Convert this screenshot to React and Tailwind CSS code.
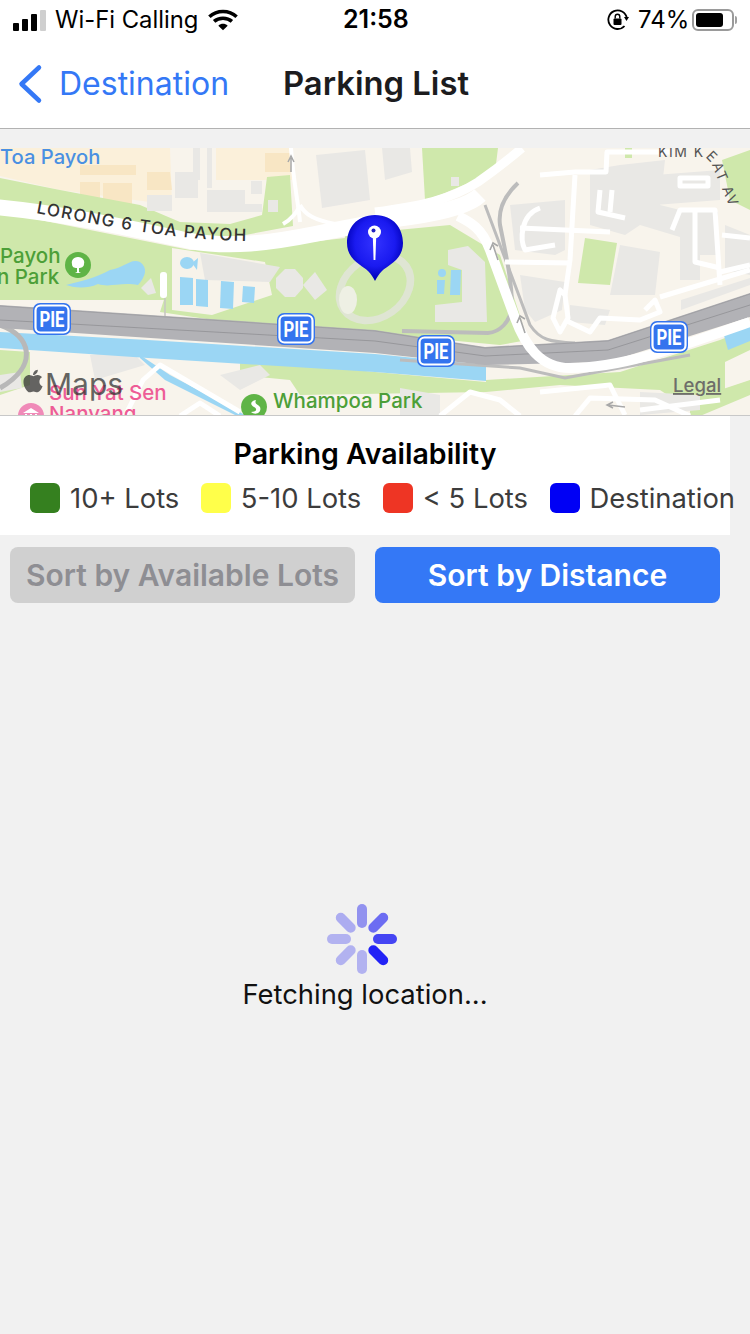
import React from 'react';
import { FaApple } from 'react-icons/fa';

const FONT = { fontFamily: 'Inter, "Noto Sans", sans-serif' };

const legendItems = [
  { label: '10+ Lots', color: 'bg-[#35801f]' },
  { label: '5-10 Lots', color: 'bg-[#ffff4a]' },
  { label: '< 5 Lots', color: 'bg-[#ee3524]' },
  { label: 'Destination', color: 'bg-[#0000f5]' },
];

const spinnerBars = [
  { angle: 0, color: '#9292ef' },
  { angle: 45, color: '#6c6cf2' },
  { angle: 90, color: '#4545f3' },
  { angle: 135, color: '#2222f6' },
  { angle: 180, color: '#b2b2f0' },
  { angle: 225, color: '#b2b2f0' },
  { angle: 270, color: '#b2b2f0' },
  { angle: 315, color: '#acacf0' },
];

const signalBars = [
  { height: 'h-[8px]', color: 'bg-black' },
  { height: 'h-[12px]', color: 'bg-black' },
  { height: 'h-[17px]', color: 'bg-black' },
  { height: 'h-[21px]', color: 'bg-[#cfcfcf]' },
];

// land-use fills on the map, in page coordinates
const greens = [
  'M0 212 L100 232 L190 250 L178 300 L0 300Z',
  'M180 250 L240 250 L345 238 L345 340 L160 312Z',
  'M345 235 L450 225 L500 255 L528 340 L500 345 L340 330Z',
  'M422 148 L498 148 L495 172 L440 195 L425 200Z',
  'M0 178 L60 190 L140 205 L180 222 L230 224 L262 215 L267 177 L290 175 L293 226 L240 236 L190 236 L100 222 L0 205Z',
  'M585 238 L617 243 L610 285 L578 283Z',
  'M240 358 L375 372 L486 382 L486 392 L300 395 L290 380 L240 375Z',
  'M486 380 L620 372 L720 340 L750 328 L750 350 L725 362 L725 395 L690 410 L660 390 L560 385 L486 392Z',
  'M722 160 L750 150 L750 210 L730 200Z',
  'M0 350 L30 352 L30 385 L0 395Z',
  'M690 400 L750 380 L750 395 L700 416 L690 416Z',
  'M625 148 L632 148 L632 158 L625 158Z',
];

const buildings = [
  'M147 195 L172 195 L172 211 L147 211Z',
  'M175 172 L198 172 L198 198 L175 198Z',
  'M207 190 L245 190 L245 204 L262 204 L262 212 L207 212Z',
  'M251 181 L262 181 L262 194 L251 194Z',
  'M268 200 L278 200 L278 212 L268 212Z',
  'M193 148 L200 148 L200 180 L193 180Z',
  'M207 148 L212 148 L212 188 L207 188Z',
  'M316 155 L365 150 L370 200 L322 208Z',
  'M382 148 L410 148 L412 172 L385 180Z',
  'M451 177 L459 177 L459 186 L451 186Z',
  'M448 250 L468 246 L485 262 L487 322 L435 322 L435 305 L462 302 L462 270 L448 265Z',
  'M510 205 L565 200 L565 250 L555 255 L515 250Z',
  'M520 275 L565 282 L562 310 L535 322 L525 310Z',
  'M590 170 L620 165 L665 160 L660 205 L700 215 L690 240 L640 225 L625 235 L590 225Z',
  'M655 175 L720 170 L720 200 L655 205Z',
  'M620 245 L660 252 L655 295 L610 295 L618 255Z',
  'M680 212 L700 212 L700 280 L680 280Z',
  'M700 212 L718 212 L718 255 L700 255Z',
  'M725 225 L750 235 L750 275 L725 270Z',
  'M570 305 L610 310 L605 325 L570 322Z',
  'M681 300 L750 278 L750 285 L681 310Z',
  'M90 355 L130 350 L145 365 L95 380Z',
  'M220 375 L260 365 L270 375 L240 390Z',
  'M0 375 L20 372 L22 388 L0 392Z',
  'M276 278 L285 269 L295 269 L303 278 L303 288 L295 297 L285 297 L276 288Z',
  'M303 285 L315 272 L327 290 L315 300Z',
  'M141 288 L151 278 L156 293 L148 295Z',
  'M640 392 L700 395 L700 410 L640 415Z',
  'M400 388 L440 395 L440 416 L400 416Z',
];

const tans = [
  'M0 148 L170 148 L172 205 L60 190 L0 176Z',
  'M216 148 L292 148 L292 180 L216 180Z',
];

const darkTans = [
  'M80 182 L100 182 L100 205 L80 205Z',
  'M103 183 L132 183 L132 205 L103 205Z',
  'M80 165 L136 165 L136 175 L80 175Z',
  'M147 172 L170 172 L172 190 L147 190Z',
  'M265 153 L292 153 L292 172 L265 172Z',
];

// thin service roads between the blocks on the right
const lanes = [
  'M540 208 C520 215 520 240 525 250 L555 245',
  'M520 228 L610 232',
  'M575 175 L570 260 L565 295',
  'M600 190 L598 212 L625 218',
  'M612 190 L610 212',
  'M540 175 L575 172 L606 172 L607 152 L670 152',
  'M505 262 L570 263',
  'M560 290 L553 318 L560 332 L568 318 L565 295 Z',
  'M565 320 L590 332 L600 318 L640 320 L660 312 L655 300 L645 310',
  'M672 230 L680 210 L715 210 L720 285',
  'M695 212 L695 262 L720 268',
  'M680 178 L708 178 L708 186 L680 186 Z',
  'M722 235 L750 238',
  'M720 272 L750 265',
  'M660 297 L750 270',
  'M540 392 L610 385 L625 415',
  'M640 410 L720 400',
  'M125 416 L143 380 L160 365 L240 412',
  'M180 416 L200 403 L220 416',
  'M440 416 L470 392 L500 400 L520 416',
  'M575 416 L590 398 L655 400 L690 416',
];

function MapPin() {
  return (
    <g>
      <path d="M375 215 C394 215 403 229 403 243 C403 260 388 265 382 271 C379 274 377 277 375 281 C373 277 371 274 368 271 C362 265 347 260 347 243 C347 229 356 215 375 215Z" fill="url(#pinFill)" />
      <circle cx="374.5" cy="232" r="6.5" fill="white" />
      <path d="M372.8 236 L376.2 236 L375.4 260 L373.6 260Z" fill="white" />
      <circle cx="373.5" cy="230.5" r="2" fill="#2020c0" />
    </g>
  );
}

function RouteBadge({ x, y }) {
  return (
    <g>
      <rect x={x - 19} y={y - 16} width="38" height="32" rx="7" fill="#3474ee" />
      <rect x={x - 16.5} y={y - 13.5} width="33" height="27" rx="5" fill="none" stroke="white" strokeWidth="2.2" />
      <text x={x} y={y + 8} textAnchor="middle" fill="white" fontSize="22" fontWeight="700" textLength="25" lengthAdjust="spacingAndGlyphs" style={{ fontFamily: 'Roboto, sans-serif' }}>PIE</text>
    </g>
  );
}

function ParkMap() {
  return (
    <svg viewBox="0 148 750 267" width="750" height="267" className="block" style={FONT}>
      <defs>
        <radialGradient id="pinFill" cx="50%" cy="42%" r="55%">
          <stop offset="0%" stopColor="#3333ff" />
          <stop offset="65%" stopColor="#1a1af0" />
          <stop offset="100%" stopColor="#0000b8" />
        </radialGradient>
        <path id="lorongPath" d="M36 213 C100 225 170 240 250 241" />
        <path id="kimPath" d="M658 157 L700 157 C710 157 712 165 716 175 L730 208" />
      </defs>

      <rect x="0" y="148" width="750" height="267" fill="#f8f4ec" />
      {tans.map((d) => <path key={d} d={d} fill="#fbf0da" />)}
      {darkTans.map((d) => <path key={d} d={d} fill="#f8e6c4" />)}
      {greens.map((d) => <path key={d} d={d} fill="#cfe8ab" />)}
      {buildings.map((d) => <path key={d} d={d} fill="#e9e8e5" />)}

      {/* pool block */}
      <path d="M172 248 L265 262 L272 295 L212 315 L172 310Z" fill="#f7f3ea" />
      <path d="M200 253 L280 267 L270 282 L205 280Z" fill="#e7e6e3" />
      <path d="M180 277 L193 278 L193 305 L180 305Z M196 279 L208 280 L208 307 L196 306Z M221 281 L234 282 L233 309 L220 308Z M243 286 L255 287 L254 303 L242 302Z" fill="#9bd6f4" />
      <ellipse cx="187" cy="263" rx="7" ry="6" fill="#9bd6f4" />
      <path d="M192 263 L198 258 L197 270Z" fill="#9bd6f4" />
      <path d="M66 285 C85 280 95 278 110 270 C125 268 130 258 140 262 C148 268 146 276 138 285 C120 282 110 288 98 284 C85 290 72 287 66 285Z" fill="#9bd6f4" />
      <rect x="160" y="272" width="7" height="26" rx="3" fill="white" />
      <path d="M165 298 L165 336 M145 340 L145 355 L160 355" stroke="#c8c8c2" strokeWidth="1.6" fill="none" />

      {/* stadium */}
      <ellipse cx="375" cy="288" rx="42" ry="33" fill="#dfe5d3" transform="rotate(-35 375 288)" />
      <ellipse cx="375" cy="288" rx="34" ry="26" fill="#cfe8ab" transform="rotate(-35 375 288)" />
      <ellipse cx="348" cy="300" rx="9" ry="14" fill="#eef0e4" />
      <path d="M437 280 L445 280 L444 294 L437 294Z M451 270 L461 270 L460 295 L450 295Z" fill="#9bd6f4" />
      <circle cx="442" cy="273" r="4" fill="#9bd6f4" />

      {/* water */}
      <path d="M0 332 L148 340 L375 354 L486 365 L486 381 L375 372 L148 358 L0 348Z" fill="#9bd6f4" />
      <path d="M723 332 L750 322 L750 341 L728 350Z" fill="#9bd6f4" />
      <path d="M140 355 L170 375 L245 415 L235 415 L165 380 L140 358Z" fill="#9bd6f4" />

      {/* grey ramps */}
      <path d="M0 325 C30 335 40 365 0 388" stroke="#b8b8b8" strokeWidth="5" fill="none" />
      <path d="M518 183 C505 195 498 210 500 225 C505 250 512 280 512 307 C510 322 500 332 488 333 L402 331" stroke="#bcbcbc" strokeWidth="4" fill="none" />
      <path d="M485 205 L530 325 C540 340 550 342 575 343" stroke="#bcbcbc" strokeWidth="3" fill="none" />
      <path d="M400 360 L520 368 L565 378 L690 355" stroke="#bcbcbc" strokeWidth="3" fill="none" />

      {/* expressway */}
      <path d="M0 305 L375 330 L485 347 L608 340 L750 293 L750 317 L608 362 L485 365 L375 353 L0 328Z" fill="#b2b2b6" />
      <path d="M0 320 L375 341 L485 356 L608 350 L750 305" stroke="#97979b" strokeWidth="1" fill="none" />
      <path d="M0 306 L375 331 L485 348 L608 341 L750 294" stroke="#a0a0a4" strokeWidth="1" fill="none" />

      {/* roads */}
      <path d="M-5 207 C60 213 120 226 190 241 C230 248 270 243 315 234 C345 228 375 222 410 217 C445 212 470 205 480 195" stroke="white" strokeWidth="16" fill="none" />
      <path d="M375 212 C420 206 450 200 478 182 C495 170 508 160 522 148" stroke="white" strokeWidth="9" fill="none" />
      <path d="M458 216 C470 222 482 228 490 250 L515 318 C525 345 540 368 570 368 C620 368 670 350 750 322" stroke="white" strokeWidth="10" fill="none" />
      <path d="M291 148 C293 180 298 200 300 222 M300 205 C305 215 315 220 335 224 M300 205 C296 215 290 220 283 224" stroke="white" strokeWidth="4" fill="none" />
      {lanes.map((d) => <path key={d} d={d} stroke="white" strokeWidth="5" fill="none" strokeLinejoin="round" />)}
      <path d="M291 172 L291 158 M288 162 L291 156 L294 162" stroke="#a8a8a8" strokeWidth="1.5" fill="none" />
      <path d="M498 260 L493 245 M490 250 L493 243 L498 246 M525 333 L520 318 M517 323 L520 316 L525 319" stroke="#a8a8a8" strokeWidth="1.6" fill="none" />
      <path d="M625 407 L608 405 M613 402 L607 405 L613 408" stroke="#a8a8a8" strokeWidth="1.5" fill="none" />

      {/* labels */}
      <text fontSize="17" fontWeight="500" fill="#333" letterSpacing="1.4"><textPath href="#lorongPath">LORONG 6 TOA PAYOH</textPath></text>
      <text fontSize="14" fill="#555" letterSpacing="1.5"><textPath href="#kimPath">KIM KEAT AVE</textPath></text>
      <text x="0" y="164" fontSize="20.2" fontWeight="500" fill="#4a90e2">Toa Payoh</text>
      <text x="0" y="263" fontSize="20.5" fontWeight="500" fill="#4c9f38">Payoh</text>
      <text x="-3" y="284" fontSize="20.5" fontWeight="500" fill="#4c9f38">n Park</text>
      <circle cx="78" cy="265" r="13" fill="#5fb446" />
      <path d="M78 257 C83 257 85 261 84 264 C84 267 81 268 79 268 L79 272 L81 273 L75 273 L77 272 L77 268 C74 268 72 267 72 264 C71 261 73 257 78 257Z" fill="white" />
      <text x="273" y="408" fontSize="20.5" fontWeight="500" fill="#4c9f38">Whampoa Park</text>
      <circle cx="254" cy="407" r="13" fill="#5fb446" />
      <path d="M256 400 C250 401 250 405 254 407 C258 409 256 412 251 412 C256 416 262 412 260 407 C258 404 254 404 256 400Z" fill="white" />
      <text x="49" y="400" fontSize="20.5" fontWeight="500" fill="#ee5c96">Sun Yat Sen</text>
      <text x="49" y="421" fontSize="20.5" fontWeight="500" fill="#ee5c96">Nanyang</text>
      <circle cx="31" cy="416" r="13" fill="#f08ab8" />
      <path d="M23 413 L31 408 L39 413Z M25 414 H27 V421 H25Z M30 414 H32 V421 H30Z M35 414 H37 V421 H35Z" fill="white" />
      <text x="673" y="392" fontSize="18.6" fontWeight="500" fill="#6e6e6a" textDecoration="underline">Legal</text>

      <RouteBadge x={52} y={319} />
      <RouteBadge x={296} y={329} />
      <RouteBadge x={436} y={351} />
      <RouteBadge x={669} y={337} />

      <g opacity="0.75">
        <FaApple x={20} y={368} size={26} color="#333" />
        <text x="45" y="395" fontSize="30" fill="#333">Maps</text>
      </g>

      <MapPin />
    </svg>
  );
}

function StatusBar() {
  return (
    <div className="flex items-center h-[40px] bg-white text-black">
      <div className="flex items-end gap-[3px] ml-[13px]">
        {signalBars.map((bar, i) => (
          <span key={i} className={`w-[6px] rounded-[1px] ${bar.height} ${bar.color}`} />
        ))}
      </div>
      <span className="ml-[9px] w-[153px] text-[23.8px] whitespace-nowrap">Wi-Fi Calling</span>
      <svg width="30" height="24" viewBox="0 0 32 24">
        <path d="M1.5 8.5 C9.5 1 22.5 1 30.5 8.5" stroke="black" strokeWidth="3.8" fill="none" />
        <path d="M6.5 13.5 C11.5 9 20.5 9 25.5 13.5" stroke="black" strokeWidth="3.8" fill="none" />
        <path d="M11 18 L16 23 L21 18 C18 15.5 14 15.5 11 18Z" fill="black" />
      </svg>
      <span className="ml-[105px] w-[64px] text-[25px] font-semibold whitespace-nowrap">21:58</span>
      <svg width="22" height="22" viewBox="0 0 22 22" className="ml-[200px]">
        <path d="M17.5 17 A9.3 9.3 0 1 1 19.8 9" stroke="black" strokeWidth="1.8" fill="none" />
        <path d="M17 8 L22 8 L19.5 12Z" fill="black" />
        <rect x="6.5" y="9.5" width="8" height="6.5" rx="1" fill="black" />
        <path d="M8.2 9.5 V7.5 A2.3 2.3 0 0 1 12.8 7.5 V9.5" stroke="black" strokeWidth="1.4" fill="none" />
      </svg>
      <span className="ml-[9px] w-[48px] text-[24px] whitespace-nowrap">74%</span>
      <div className="ml-[6px] w-[42px] h-[22px] rounded-[6px] border-2 border-[#9a9a9a] p-[2px] flex">
        <div className="w-[27px] bg-black rounded-[3px]" />
      </div>
      <div className="ml-[1px] w-[2px] h-[8px] bg-[#a0a0a0] rounded-r-sm" />
    </div>
  );
}

function NavBar() {
  return (
    <div className="flex items-center h-[89px] bg-white border-b border-[#b2b2b2]">
      <svg width="26" height="40" viewBox="0 0 26 40" className="ml-[18px]">
        <path d="M21 3.5 L3.5 20 L21 36.5" stroke="#3478f6" strokeWidth="4.5" fill="none" strokeLinecap="round" strokeLinejoin="round" />
      </svg>
      <span className="ml-[15px] w-[224px] text-[32px] text-[#3478f6]">Destination</span>
      <span className="text-[32.8px] font-semibold text-[#1c1c1e]">Parking List</span>
    </div>
  );
}

function Legend() {
  return (
    <div className="w-[730px] h-[119px] bg-white pt-[22px]">
      <div className="text-center text-[28.5px] leading-[32px] font-semibold text-black">Parking Availability</div>
      <div className="flex items-center gap-[21.5px] pl-[30px] mt-[12px] whitespace-nowrap">
        {legendItems.map((item) => (
          <div key={item.label} className="flex items-center gap-[10px]">
            <span className={`w-[30px] h-[30px] rounded-[6px] ${item.color}`} />
            <span className="text-[27.4px] leading-[32px] text-[#3c3c3c]">{item.label}</span>
          </div>
        ))}
      </div>
    </div>
  );
}

function Spinner() {
  return (
    <svg width="70" height="70" viewBox="-35 -35 70 70" className="mr-[6px]">
      {spinnerBars.map((bar) => (
        <rect key={bar.angle} x="-5" y="-35" width="10" height="24" rx="5" fill={bar.color} transform={`rotate(${bar.angle})`} />
      ))}
    </svg>
  );
}

export default function App() {
  return (
    <div className="w-[750px] h-[1334px] overflow-hidden bg-[#f1f1f1]" style={FONT}>
      <StatusBar />
      <NavBar />
      <div className="h-[19px]" />
      <ParkMap />
      <div className="h-[1px] bg-[#c8c8c8]" />
      <Legend />
      <div className="flex gap-[20px] px-[10px] mt-[12px]">
        <button className="w-[345px] h-[56px] rounded-[8px] bg-[#d0d0d0] text-[#8e8e93] text-[30px] font-semibold whitespace-nowrap">Sort by Available Lots</button>
        <button className="w-[345px] h-[56px] rounded-[8px] bg-[#3478f6] text-white text-[30px] font-semibold whitespace-nowrap">Sort by Distance</button>
      </div>
      <div className="w-[730px] flex flex-col items-center pt-[301px]">
        <Spinner />
        <div className="mt-[2px] text-[27.4px] leading-[36px] text-[#111]">Fetching location...</div>
      </div>
    </div>
  );
}
